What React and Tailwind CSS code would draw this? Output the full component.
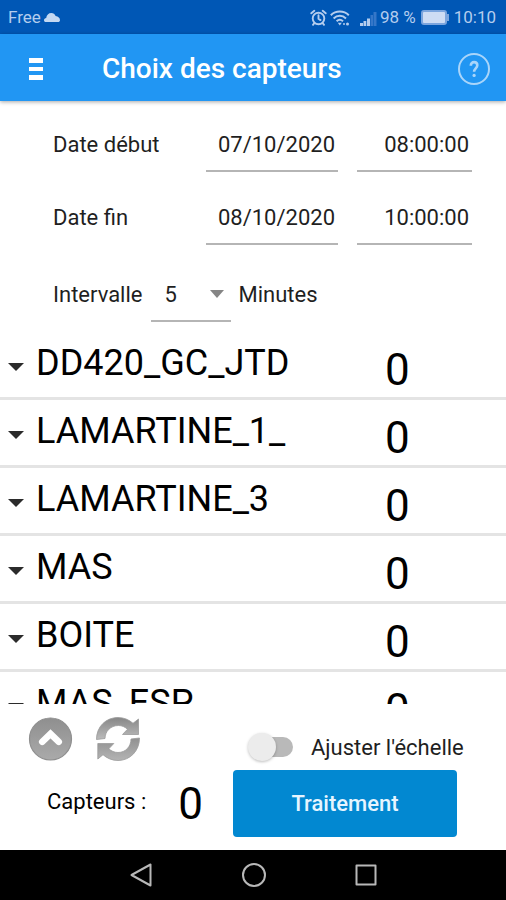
import { useState } from 'react';

const sensors = [
  { id: 1, name: 'DD420_GC_JTD', count: 0 },
  { id: 2, name: 'LAMARTINE_1_', count: 0 },
  { id: 3, name: 'LAMARTINE_3', count: 0 },
  { id: 4, name: 'MAS', count: 0 },
  { id: 5, name: 'BOITE', count: 0 },
  { id: 6, name: 'MAS_ESP', count: 0 },
];

const StatusBar = () => (
  <div className="flex h-[34px] shrink-0 items-center bg-[#0057b5] px-2 pt-0.5 text-[17px] text-[#b4cdee]">
    <span>Free</span>
    <svg className="ml-[3px] h-3 w-4" viewBox="0 0 16 12" fill="#c3d8f2">
      <path d="M2 10C.6 10 0 9.200 0 8.200 0 7 1 6.200 2.200 6.100 2.500 3 4.600 1 7.300 1c2.200 0 3.500 1.300 4.300 3.100C14.200 4.600 16 6 16 8.200 16 9.300 15 10 14 10z" />
    </svg>
    <div className="ml-auto flex items-center">
      <svg className="h-[18px] w-[17px]" viewBox="0 0 17 18" fill="none" stroke="#b4cdee" strokeWidth="1.9" strokeLinecap="round">
        <circle cx="8.500" cy="9.500" r="5.800" />
        <path d="M8.500 6.300v3.500l2 1.300M1.300 4.300l3-2.500M15.700 4.300l-3-2.500M4.300 14.200l-1.300 1.600M12.700 14.200l1.300 1.600" />
      </svg>
      <svg className="ml-[3px] h-[18px] w-5" viewBox="0 0 20 18" fill="none" stroke="#b4cdee" strokeWidth="2">
        <path d="M.8 6.200c5-4.800 13-4.800 18 0M3.600 9.400c3.600-3.400 8.800-3.400 12.400 0M6.600 12.300c2-1.900 4.400-1.900 6.400 0" />
        <path d="M7.800 13.800h4l-2 2.600z" fill="#b4cdee" stroke="none" />
        <circle cx="14" cy="15" r="1" fill="#b4cdee" stroke="none" />
        <circle cx="17.500" cy="15" r="1.500" fill="#b4cdee" stroke="none" />
      </svg>
      <svg className="ml-[10px] h-4 w-[17px]" viewBox="0 0 17 16">
        <path d="M0 13h3v3H0zM3.500 11h2.800v5H3.500zM7 8.500h3V16H7z" fill="#b4cdee" />
        <path d="M10.500 5H13v11h-2.500zM13.500 2h3v14h-3z" fill="#3577c8" />
      </svg>
      <span className="ml-[3px]">98 %</span>
      <svg className="ml-[5px] h-4 w-7" viewBox="0 0 28 16">
        <rect x="1" y="1" width="24" height="13" rx="2" fill="#cddcf4" stroke="#7ba5de" strokeWidth="2" />
        <rect x="26" y="4" width="2" height="7" fill="#7ba5de" />
      </svg>
      <span className="ml-[5px] mr-[2px]">10:10</span>
    </div>
  </div>
);

const AppBar = () => (
  <header className="z-10 flex h-[67px] shrink-0 items-center bg-[#2196f3] pl-7 pr-4 pt-0.5 text-white shadow-[0_1px_4px_rgba(0,0,0,0.35)]">
    <button type="button" aria-label="Menu">
      <svg className="h-[22px] w-4" viewBox="0 0 16 22" fill="currentColor">
        <path d="M1 0h14v5H1zM1 9h14v4H1zM1 17h14v5H1z" />
      </svg>
    </button>
    <h1 className="ml-[58px] text-[28px] font-medium">Choix des capteurs</h1>
    <button type="button" aria-label="Aide" className="ml-auto">
      <svg className="h-8 w-8" viewBox="0 0 32 32" fill="none" stroke="#a9d5fa" strokeWidth="2">
        <circle cx="16" cy="16" r="15" />
        <path d="M12.800 12.800c0-2.200 1.300-3.700 3.300-3.700s3.200 1.300 3.200 3.200c0 2.900-3.200 3.200-3.200 6.400" strokeWidth="2.600" />
        <circle cx="16.100" cy="22.400" r="1.600" fill="#a9d5fa" stroke="none" />
      </svg>
    </button>
  </header>
);

const DateRow = ({ id, label, date, time }) => (
  <div className="grid grid-cols-[134px_132fr_115fr] items-center gap-[19px]">
    <label htmlFor={id}>{label}</label>
    <input
      id={id}
      defaultValue={date}
      className="h-14 w-full min-w-0 border-b-2 border-[#b5b5b5] pr-[3px] pt-0.5 text-right outline-none"
    />
    <input
      aria-label={`${label}, heure`}
      defaultValue={time}
      className="h-14 w-full min-w-0 border-b-2 border-[#b5b5b5] pr-[3px] pt-0.5 text-right outline-none"
    />
  </div>
);

const SensorRow = ({ name, count }) => (
  <li className="h-[68px] border-b-3 border-[#e4e4e4]">
    <button type="button" className="flex h-full w-full items-center pl-2 pt-1 text-left">
      <svg className="h-2 w-4 shrink-0" viewBox="0 0 16 8" fill="#2b2b2b">
        <path d="M0 0h16L8 8z" />
      </svg>
      <span className="ml-3 flex-1 pb-[7px] text-4xl">{name}</span>
      <span className="w-[121px] pt-1.5 text-[44px] leading-none">{count}</span>
    </button>
  </li>
);

const Footer = () => {
  const [fit, setFit] = useState(false);

  return (
    <footer className="grid shrink-0 grid-cols-[233px_1fr] bg-white pb-[13px]">
      <div className="flex h-[66px] gap-[22px] pl-7 pt-3">
        <button type="button" aria-label="Monter" className="h-[46px]">
          <svg className="h-[46px] w-[46px]" viewBox="0 0 46 46">
            <defs>
              <linearGradient id="disc" x1="0" y1="0" x2="0" y2="1">
                <stop offset="0" stopColor="#8f8f8f" />
                <stop offset="1" stopColor="#aaaaaa" />
              </linearGradient>
            </defs>
            <circle cx="22.500" cy="23" r="21" fill="url(#disc)" stroke="#8f8f8f" strokeWidth="1.200" />
            <path d="M14.200 25.800l8.300-8 8.300 8" fill="none" stroke="#fff" strokeWidth="6.500" strokeLinecap="round" strokeLinejoin="miter" />
          </svg>
        </button>
        <button type="button" aria-label="Actualiser" className="h-[46px]">
          <svg className="h-[46px] w-[46px]" viewBox="0 0 46 46">
            <defs>
              <linearGradient id="arrowTop" x1="0" y1="0" x2="0" y2="1">
                <stop offset="0" stopColor="#868686" />
                <stop offset="1" stopColor="#bcbcbc" />
              </linearGradient>
              <linearGradient id="arrowBottom" x1="0" y1="0" x2="0" y2="1">
                <stop offset="0" stopColor="#909090" />
                <stop offset="1" stopColor="#b4b4b4" />
              </linearGradient>
            </defs>
            <g stroke="#9a9a9a" strokeWidth="0.800">
              <path d="M.5 23.500C.5 10.500 10 1.500 22 1.500c5.800 0 11 2.200 15 5.800L42.500 3v15.500H26.500l5-5.300C29 11 26 9.500 22.500 9.500 14.500 9.500 9 15.500 9 22.500z" fill="url(#arrowTop)" />
              <path d="M43.500 22C43.500 35 34 44.500 22 44.500c-5.800 0-11-2.200-15-5.800L1.800 43V27.500h16l-5 5.300c2.500 2.200 5.500 3.700 9.200 3.700 7.700 0 13-6 13-13.500z" fill="url(#arrowBottom)" />
            </g>
          </svg>
        </button>
      </div>
      <div className="flex h-[66px] items-center pl-[15px] pt-5">
        <input
          id="fit"
          type="checkbox"
          role="switch"
          checked={fit}
          onChange={(e) => setFit(e.target.checked)}
          className="relative h-5 w-[45px] shrink-0 appearance-none before:absolute before:right-0 before:top-0 before:h-5 before:w-9 before:rounded-full before:bg-[#b9b9b9] after:absolute after:-top-1 after:left-0 after:h-7 after:w-7 after:rounded-full after:bg-[#ececec] after:shadow-[0_1px_3px_rgba(0,0,0,0.25)] checked:after:left-[17px]"
        />
        <label htmlFor="fit" className="ml-[18px]">Ajuster l'échelle</label>
      </div>
      <div className="flex items-center justify-between pl-[47px] pr-[30px] text-black">
        <span className="pb-1">Capteurs :</span>
        <span className="text-[44px] leading-none">0</span>
      </div>
      <button type="button" className="mr-[49px] h-[67px] rounded bg-[#0288d1] font-medium text-[#e6f5ff]">
        Traitement
      </button>
    </footer>
  );
};

const NavBar = () => (
  <nav className="flex h-[50px] shrink-0 items-center justify-center gap-[88px] bg-black pl-0.5 text-[#b8b8b8]">
    <button type="button" aria-label="Retour">
      <svg className="h-6 w-6" viewBox="0 0 24 24" fill="none" stroke="currentColor" strokeWidth="2" strokeLinejoin="round">
        <path d="M20.500 1.500v21L1.500 12z" />
      </svg>
    </button>
    <button type="button" aria-label="Accueil">
      <svg className="h-6 w-6" viewBox="0 0 24 24" fill="none" stroke="currentColor" strokeWidth="2">
        <circle cx="12" cy="12" r="11" />
      </svg>
    </button>
    <button type="button" aria-label="Applications">
      <svg className="h-6 w-6" viewBox="0 0 24 24" fill="none" stroke="currentColor" strokeWidth="2" strokeLinejoin="round">
        <rect x="2.500" y="2.500" width="19" height="19" />
      </svg>
    </button>
  </nav>
);

const App = () => {
  return (
    <div className="flex h-screen flex-col bg-white font-[Roboto,sans-serif] text-[22px] text-[#1f1f1f]">
      <StatusBar />
      <AppBar />
      <main className="flex min-h-0 flex-1 flex-col">
        <form className="shrink-0 pb-2.5 pl-[53px] pr-[34px] pt-[15px]">
          <div className="grid gap-[17px]">
            <DateRow id="start" label="Date début" date="07/10/2020" time="08:00:00" />
            <DateRow id="end" label="Date fin" date="08/10/2020" time="10:00:00" />
          </div>
          <div className="mt-[21px] flex items-center">
            <label htmlFor="interval">Intervalle</label>
            <div className="relative ml-[9px] mr-[7px]">
              <select
                id="interval"
                defaultValue="5"
                className="h-14 w-20 appearance-none border-b-2 border-[#b5b5b5] pl-[13px] pt-0.5 outline-none"
              >
                <option>1</option>
                <option>5</option>
                <option>10</option>
              </select>
              <svg className="pointer-events-none absolute right-[7px] top-6 h-2 w-3.5" viewBox="0 0 14 8" fill="#858585">
                <path d="M0 0h14L7 8z" />
              </svg>
            </div>
            <span>Minutes</span>
          </div>
        </form>
        <ul className="min-h-0 flex-1 overflow-y-auto text-black [scrollbar-width:none]">
          {sensors.map((sensor) => (
            <SensorRow key={sensor.id} name={sensor.name} count={sensor.count} />
          ))}
        </ul>
      </main>
      <Footer />
      <NavBar />
    </div>
  );
};

export default App;
